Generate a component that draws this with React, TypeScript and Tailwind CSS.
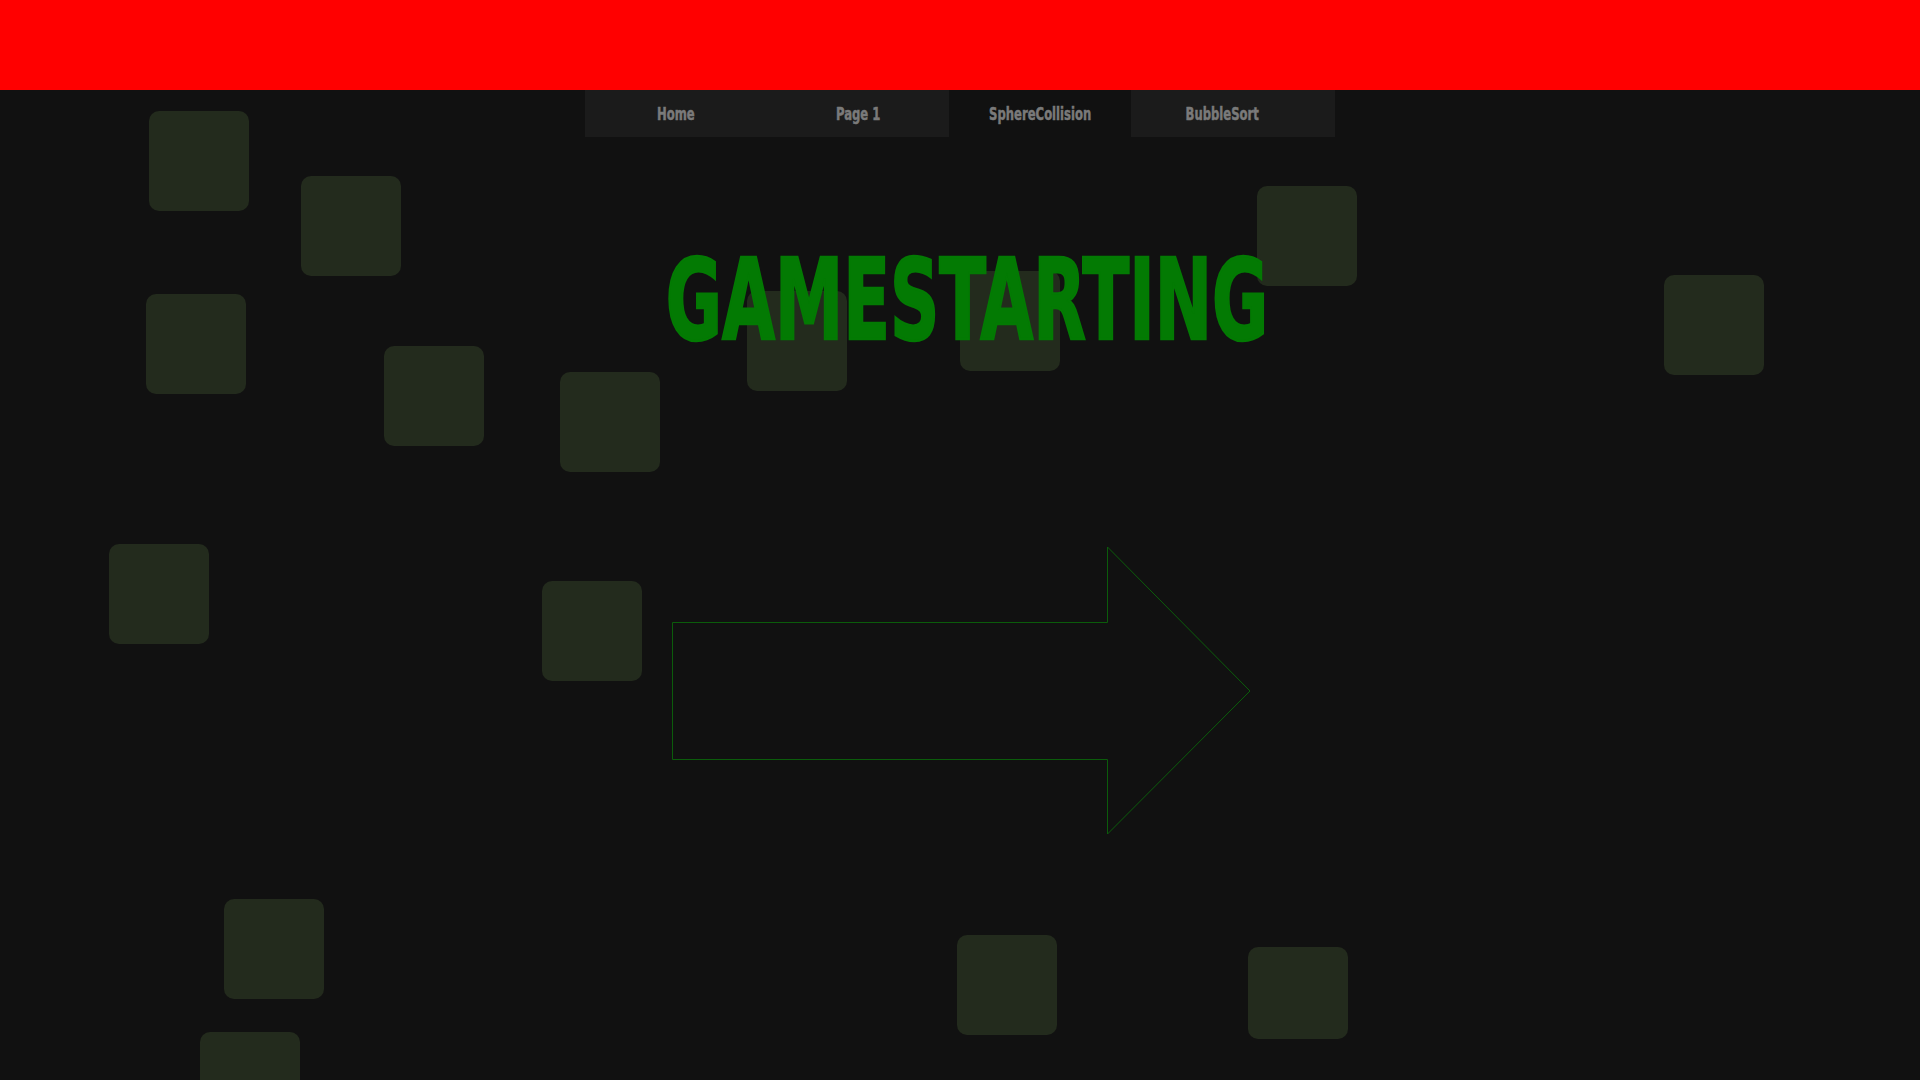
import React from 'react';

const squares = [
  'left-[149px] top-[111px] h-[100px]',
  'left-[301px] top-[176px] h-[100px]',
  'left-[146px] top-[294px] h-[100px]',
  'left-[384px] top-[346px] h-[100px]',
  'left-[560px] top-[372px] h-[100px]',
  'left-[747px] top-[291px] h-[100px]',
  'left-[960px] top-[271px] h-[100px]',
  'left-[1257px] top-[186px] h-[100px]',
  'left-[1664px] top-[275px] h-[100px]',
  'left-[109px] top-[544px] h-[100px]',
  'left-[542px] top-[581px] h-[100px]',
  'left-[224px] top-[899px] h-[100px]',
  'left-[200px] top-[1032px] h-[100px]',
  'left-[957px] top-[935px] h-[100px]',
  'left-[1248px] top-[947px] h-[92px]',
];

const tabs = [
  { label: 'Home', active: false },
  { label: 'Page 1', active: false },
  { label: 'SphereCollision', active: true },
  { label: 'BubbleSort', active: false },
];

const condensed = {
  fontFamily: 'Impact, "Liberation Sans Narrow", "DejaVu Sans Condensed", sans-serif',
};

const App = () => {
  return (
    <div className="relative w-full h-[1080px] overflow-hidden bg-[#111111]">
      {/* falling blocks */}
      <div className="absolute inset-0">
        {squares.map((cls, i) => (
          <div key={i} className={`absolute w-[100px] rounded-[10px] bg-[#232b1d] ${cls}`} />
        ))}
      </div>

      <div className="relative flex flex-col">
        <header className="h-[90px] w-full bg-[#ff0000]" />

        <nav className="mx-auto flex w-[750px] h-[47px] bg-[#1b1b1b]" style={condensed}>
          {tabs.map((t) => (
            <a
              key={t.label}
              href="#"
              className={`flex w-[182px] items-center justify-center pt-[2px] text-[17px] font-bold text-[#7a7a7a] [-webkit-text-stroke:0.5px_#7a7a7a] ${
                t.active ? 'bg-[#111111]' : 'bg-[#1b1b1b]'
              }`}
            >
              <span className="inline-block scale-x-[0.76] whitespace-nowrap">{t.label}</span>
            </a>
          ))}
        </nav>

        <h1
          className="mt-[107px] text-center text-[112px] leading-none font-bold text-[#037a03] translate-x-[7px] scale-x-[0.68] [-webkit-text-stroke:2.5px_#037a03]"
          style={condensed}
        >
          GAMESTARTING
        </h1>

        <svg
          className="mx-auto mt-[190px]"
          width="582"
          height="290"
          viewBox="669 547 582 290"
          fill="none"
        >
          <polygon
            points="672.5,623.5 1107.5,623.5 1107.5,548 1250,692 1107.5,835 1107.5,760.5 672.5,760.5"
            stroke="#0b5c0b"
            strokeWidth="1"
          />
        </svg>
      </div>
    </div>
  );
};

export default App;
